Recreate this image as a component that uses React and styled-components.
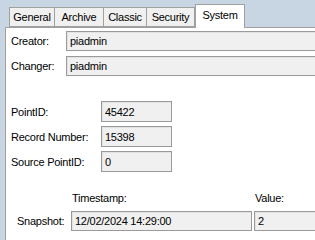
import React from "react";
import styled, { createGlobalStyle } from "styled-components";

const GlobalStyle = createGlobalStyle`
  html, body {
    margin: 0;
    padding: 0;
    background: #ffffff;
  }
  body {
    font-family: "Liberation Sans", Arial, sans-serif;
    font-size: 11px;
    letter-spacing: -0.25px;
    color: #000;
  }
`;

const Window = styled.div`
  width: 315px;
  height: 240px;
  background: #c8d5e2;
  display: flex;
  flex-direction: column;
  overflow: hidden;
`;

const TabStrip = styled.div`
  display: flex;
  align-items: flex-end;
  height: 27px;
  padding-left: 9px;
  position: relative;
  z-index: 1;
`;

const Tab = styled.div`
  box-sizing: border-box;
  width: ${(p) => p.$w}px;
  height: ${(p) => (p.$active ? 24 : 20)}px;
  margin-bottom: ${(p) => (p.$active ? -1 : 0)}px;
  border: 1px solid #a0a0a0;
  border-bottom: ${(p) => (p.$active ? "none" : "1px solid #a0a0a0")};
  border-left: ${(p) => (p.$first || p.$active ? "1px solid #a0a0a0" : "none")};
  background: ${(p) => (p.$active ? "#ffffff" : "#f0f0f0")};
  display: flex;
  align-items: ${(p) => (p.$active ? "flex-start" : "center")};
  padding-top: ${(p) => (p.$active ? 4 : 0)}px;
  justify-content: center;
  white-space: nowrap;
`;

const Panel = styled.div`
  flex: 1;
  display: flex;
  flex-direction: column;
  margin-left: 5px;
  background: #ffffff;
  border-left: 1px solid #a0a0a0;
  border-top: 1px solid #a0a0a0;
  padding: 3px 0 0 5px;
`;

const Row = styled.div`
  display: grid;
  grid-template-columns: ${(p) => p.$label}px auto;
  align-items: center;
  height: ${(p) => p.$h || 20}px;
  margin-bottom: ${(p) => p.$gap || 5}px;
  white-space: nowrap;
`;

const Field = styled.div`
  box-sizing: border-box;
  width: ${(p) => p.$w}px;
  height: ${(p) => p.$h || 20}px;
  background: #f0f0f0;
  border: 1px solid #9a9a9a;
  box-shadow: inset 1px 1px 0 #e3e3e3;
  padding-left: 3px;
  display: flex;
  align-items: center;
  white-space: nowrap;
  overflow: hidden;
`;

const Section = styled.div`
  margin-top: ${(p) => p.$top}px;
`;

const SnapGrid = styled.div`
  display: grid;
  grid-template-columns: 60px 181px 2px 70px;
  grid-template-rows: 19px 20px;
  align-items: center;
  white-space: nowrap;
`;

const SnapLabel = styled.div`
  padding-left: 6px;
`;

const ColHead = styled.div`
  grid-column: ${(p) => p.$col};
  padding-left: 1px;
  align-self: start;
`;

const tabs = [
  { name: "General", w: 46 },
  { name: "Archive", w: 49 },
  { name: "Classic", w: 43 },
  { name: "Security", w: 48 },
  { name: "System", w: 50, active: true },
];

export default function App() {
  return (
    <Window>
      <GlobalStyle />
      <TabStrip>
        {tabs.map((t, i) => (
          <Tab key={t.name} $w={t.w} $active={t.active} $first={i === 0}>
            {t.name}
          </Tab>
        ))}
      </TabStrip>
      <Panel>
        <Row $label={55}>
          <span>Creator:</span>
          <Field $w={260}>piadmin</Field>
        </Row>
        <Row $label={55} $gap={0.01}>
          <span>Changer:</span>
          <Field $w={260}>piadmin</Field>
        </Row>
        <Section $top={25}>
          <Row $label={90} $h={21} $gap={4}>
            <span>PointID:</span>
            <Field $w={71} $h={21}>45422</Field>
          </Row>
          <Row $label={90} $h={21} $gap={4}>
            <span>Record Number:</span>
            <Field $w={71} $h={21}>15398</Field>
          </Row>
          <Row $label={90} $h={21} $gap={0.01}>
            <span>Source PointID:</span>
            <Field $w={71} $h={21}>0</Field>
          </Row>
        </Section>
        <Section $top={20}>
          <SnapGrid>
            <ColHead $col={2}>Timestamp:</ColHead>
            <ColHead $col={4}>Value:</ColHead>
            <SnapLabel>Snapshot:</SnapLabel>
            <Field $w={181}>12/02/2024 14:29:00</Field>
            <span />
            <Field $w={70}>2</Field>
          </SnapGrid>
        </Section>
      </Panel>
    </Window>
  );
}
